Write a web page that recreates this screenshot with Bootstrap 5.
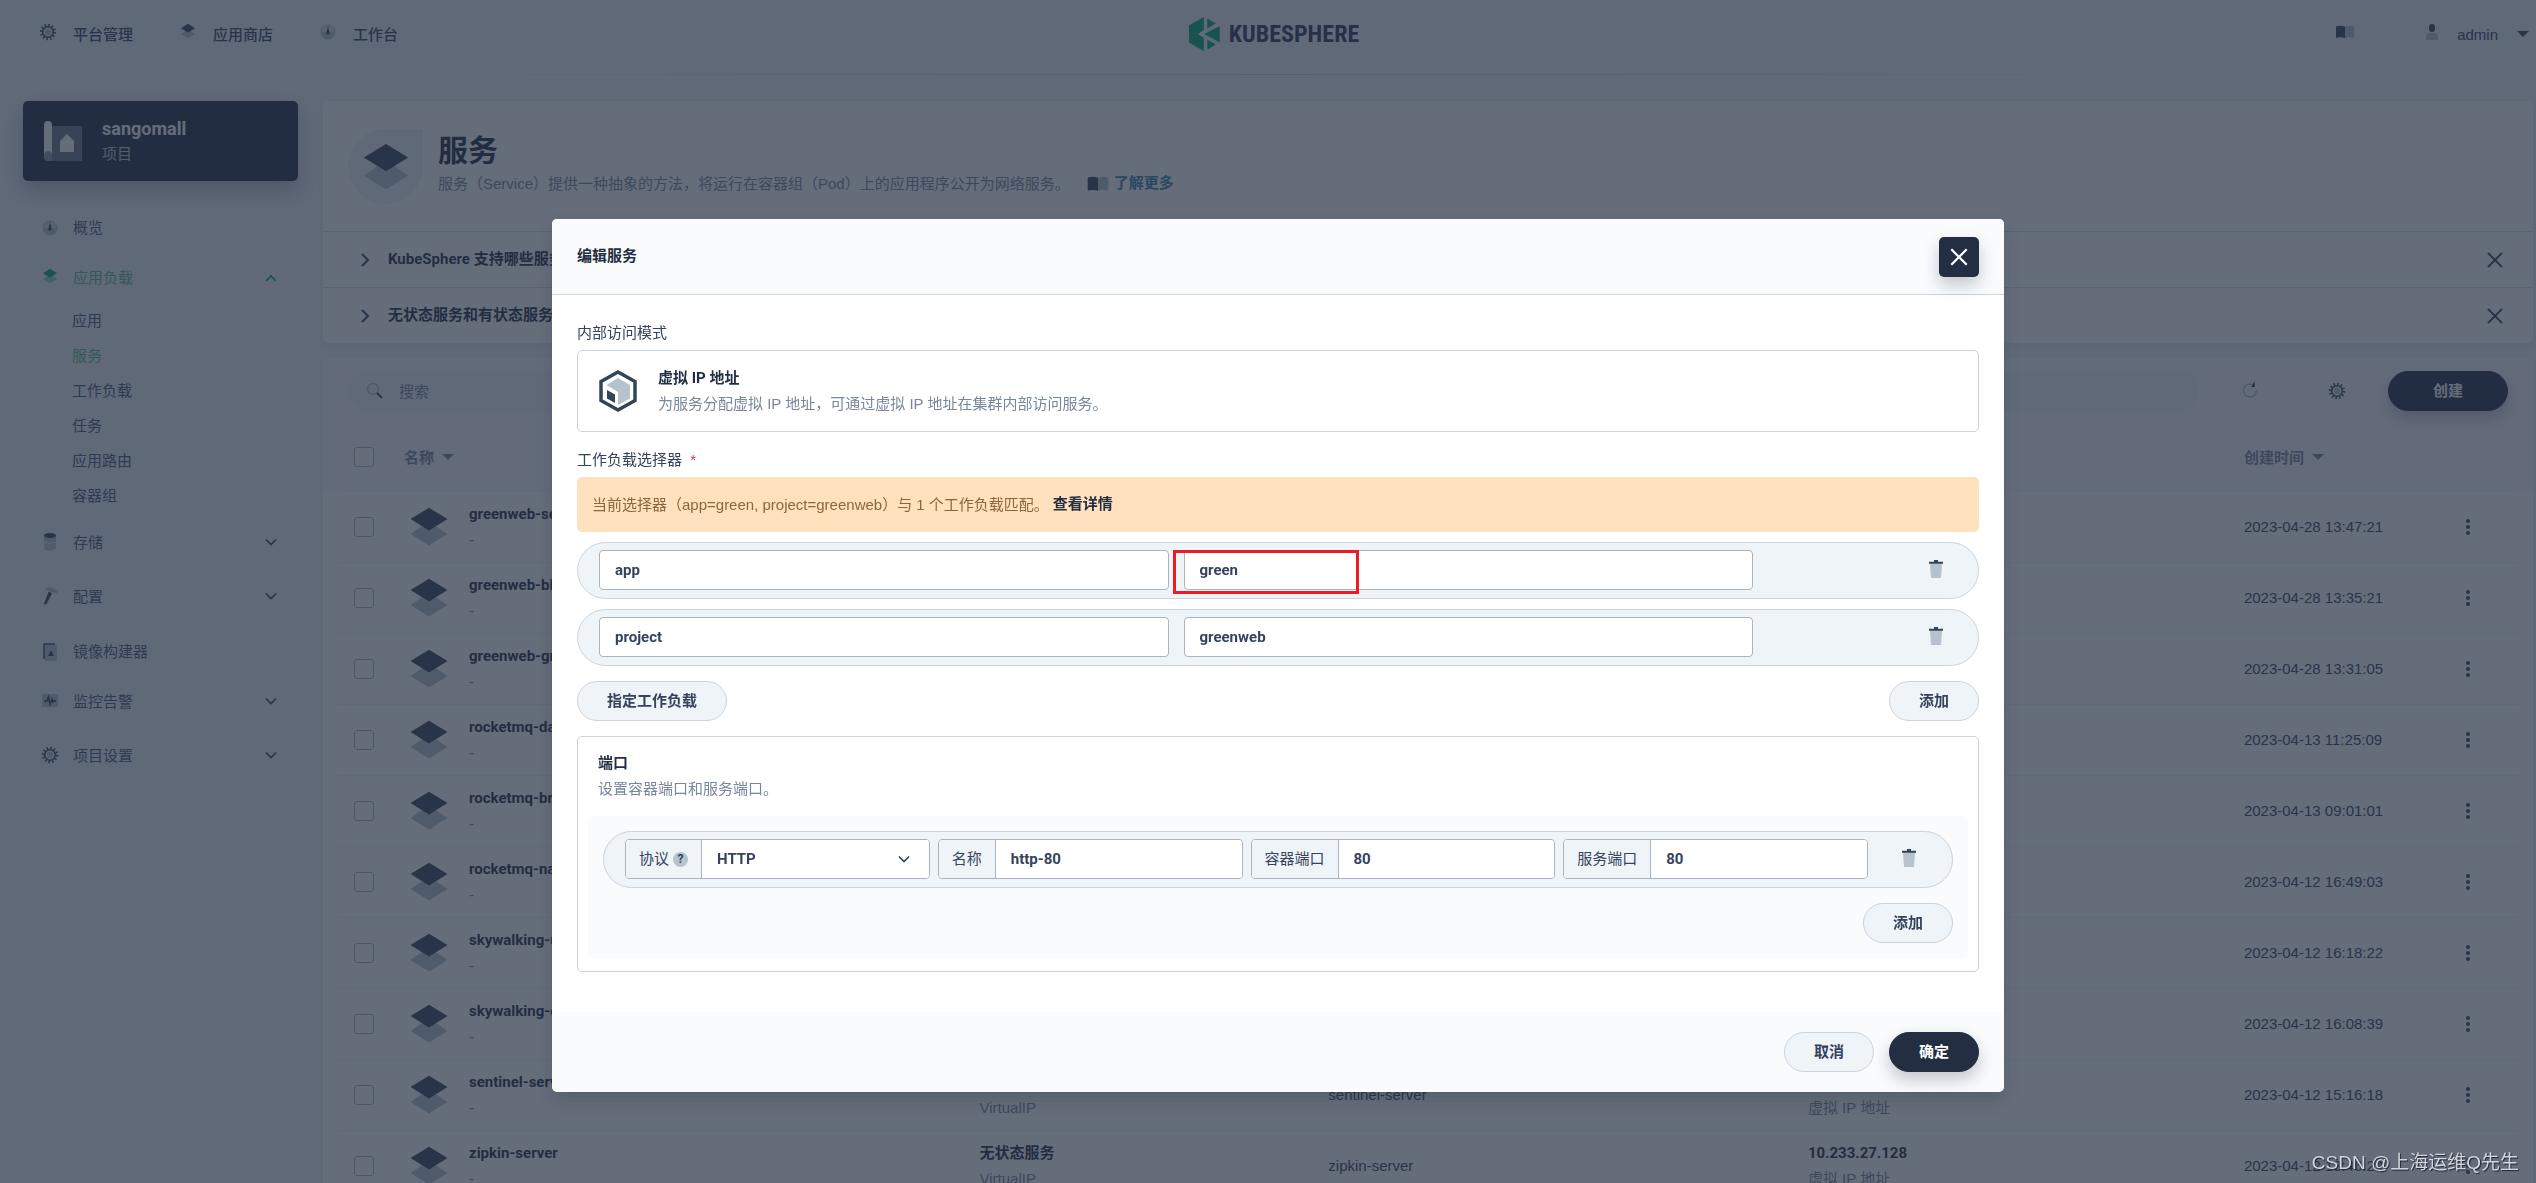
<!DOCTYPE html>
<html lang="zh-CN">
<head>
<meta charset="utf-8">
<meta name="viewport" content="width=device-width, initial-scale=1">
<title>KubeSphere - 服务</title>
<link href="https://cdn.jsdelivr.net/npm/bootstrap@5.3.0/dist/css/bootstrap.min.css" rel="stylesheet">
<style>
:root{--ink:#242e42;--ink2:#36435c;--txt:#4a5974;--mute:#79879c;--line:#ccd3db;--soft:#eff4f9;--pale:#f9fbfd;--green:#55bc8a}
body{font:15px/25px "Liberation Sans","Noto Sans CJK SC",sans-serif;color:var(--txt);background:var(--soft)}
a{color:inherit;text-decoration:none}
svg{flex:none;display:block}
.strong{font-family:Roboto,"Noto Sans CJK SC",sans-serif;font-weight:700;color:var(--ink)}
.muted{color:var(--mute)}
.ic-dark{color:#324558}
.page{height:100vh;overflow:hidden}
.ic{width:20px;height:20px}
.icon-btn{background:none;border:0;padding:0;color:var(--ink2)}
.caret{border:6px solid transparent;border-top-color:currentColor;border-bottom:0}

.topbar{height:75px;padding:0 7px 7px 38px;position:relative;color:var(--ink2)}
.topbar nav{gap:45px;font-weight:500}
.topbar nav a{gap:15px;color:var(--ink2)}
.topbar nav svg,.topbar .who svg{margin-bottom:4px}
.topbar::after{content:"";position:absolute;left:320px;right:300px;bottom:0;height:1px;background:linear-gradient(90deg,transparent,#ccd3db,transparent)}
.brand-link{left:50%;transform:translateX(-50%);margin-left:6px;gap:9px;top:17px;line-height:34px;font-family:"Liberation Sans Narrow","Roboto Condensed","Liberation Sans",sans-serif;font-size:24px;font-weight:700;color:#3b3559}
.who{gap:19px}

.columns{padding:26px 3px 0 23px;gap:25px}
.side{width:275px;flex:none}
.project{height:80px;border-radius:5px;background:var(--ink);color:#fff;padding:0 20px;gap:20px;box-shadow:0 10px 20px rgba(36,46,66,.3)}
.project .strong{font-size:18px;color:#fff}
.project small{font-size:15px;color:#c5cbd5}
.menu{padding:19px 18px 0 17px}
.menu .item{height:54px;gap:13px;width:100%;padding:0 2px 2px 0;color:var(--txt)}
.menu .item.leaf{height:51px;padding:4px 2px 0 0}
.menu .on,.menu .item.on{color:var(--green)}
.menu ul{margin:-2px 0 3px}
.menu ul a{display:block;line-height:35px;padding-left:32px}

.panel{background:#fff;border-radius:5px;box-shadow:0 4px 8px rgba(36,46,66,.06)}
.panel+.panel{margin-top:15px}
.banner{height:130px;padding:28px 25px;gap:15px}
.drop{width:75px;height:75px;border-radius:50% 0 50% 50%;background:var(--soft);display:grid;place-items:center}
.banner h1{font-size:30px;line-height:40px;margin:2px 0 0}
.banner p{line-height:25px}
.more{color:#3385b0}
.faq{height:56px;border-top:1px solid #d8dee5;padding:0 28px 0 36px;gap:16px}
.tools{height:66px;padding:0 25px;background:var(--pale);border-radius:5px 5px 0 0}
.search{height:40px;border-radius:20px;background:var(--soft);padding:0 18px;gap:13px;margin-right:42px}
.search input{border:0;background:none;outline:0;width:100%;color:var(--ink2)}
.search input::placeholder{color:var(--mute)}
.tool-icon{margin-right:67px}
.tool-icon+.tool-icon{margin-right:41px}
.pill-btn{height:40px;border-radius:20px;padding:0 29px;border:1px solid var(--line);background:var(--soft);font-family:Roboto,"Noto Sans CJK SC",sans-serif;font-weight:700;font-size:15px;line-height:36px;color:var(--ink2)}
.pill-btn.dark{background:var(--ink);border-color:var(--ink);color:#fff;box-shadow:0 8px 16px rgba(36,46,66,.25)}
.pill-btn.wide{width:120px}
.head-bg{padding:0 15px;background:linear-gradient(var(--pale),var(--pale)) top/100% 67px no-repeat}
.list{table-layout:fixed;width:100%;border-collapse:collapse}
.list th,.list td{padding:10px 16px;border-bottom:1px solid var(--soft);vertical-align:middle}
.list th{height:67px;color:var(--mute);font-weight:700}
.list td{height:71px;color:var(--ink2)}
.list b{display:block}
.list .form-check-input{width:20px;height:20px;margin:0;display:block;border-color:#abb4be;border-radius:3px}
.list td:last-child{padding-left:15px}
.svc{gap:20px;padding-left:5px}

.veil{background:rgba(36,46,66,.7);position:fixed;inset:0;z-index:1050}
.modal{padding:219px 0 0 20px;overflow:hidden}
.modal-dialog{max-width:1452px;margin:0 auto}
.modal-content{border:0;border-radius:5px;overflow:hidden;box-shadow:0 8px 16px rgba(36,46,66,.2);color:var(--txt)}
.modal-header{height:76px;padding:0 25px;background:var(--pale);border-bottom:1px solid var(--line);border-radius:0}
.modal-header .strong{font-size:15px;line-height:25px;margin:0}
.shut{width:40px;height:40px;border:0;border-radius:5px;background:var(--ink);color:#fff;display:grid;place-items:center;padding:0;box-shadow:0 8px 16px rgba(36,46,66,.25)}
.modal-body{padding:25px 25px 40px}
.modal-footer{height:80px;padding:0 25px;background:var(--pale);border:0;gap:15px}
.modal-footer>*{margin:0}
.cap{line-height:25px;height:25px;margin-bottom:5px;color:var(--ink2)}
.mode{border:1px solid var(--line);border-radius:5px;height:82px;padding:0 20px;gap:20px;margin-bottom:15px}
.tip{background:#ffe1be;color:#8d663e;border-radius:5px;padding:15px;height:55px;margin-bottom:10px}
.pillrow{height:57px;border:1px solid var(--line);border-radius:29px;background:var(--soft);padding:0 21px 1px;margin-bottom:10px;position:relative}
.pair{gap:15px}
.field{height:40px;border:1px solid #abb4be;border-radius:4px;padding:0 15px;background:#fff;font-family:Roboto,"Noto Sans CJK SC",sans-serif;font-weight:700;color:var(--ink2);min-width:0;outline:0}
.mark-box{position:absolute;left:595px;top:7px;width:186px;height:44px;border:3px solid #ed1c24;pointer-events:none}
.trash{margin:0 11px 2px 173px}
.btn-line{margin:15px 0}
.ports{border:1px solid var(--line);border-radius:5px;padding:14px 10px 13px}
.ports>.px-info{height:65px;padding:0 10px}
.ports-in{background:var(--pale);border-radius:5px;padding:15px}
.ports .pillrow{margin-bottom:15px}
.grp{flex:1 1 0;height:40px;border:1px solid #abb4be;border-radius:4px;background:#fff;overflow:hidden;min-width:0}
.grp label{padding:0 13px;line-height:38px;background:var(--soft);border-right:1px solid #abb4be;color:var(--ink2);white-space:nowrap}
.grp .field{border:0;border-radius:0;height:38px;flex:1;width:100%}
.grp select{appearance:none}
.grp .chev{position:absolute;right:18px;top:12px;pointer-events:none}
.ports .trash{margin:0 12px 2px 31px}
.qm{width:15px;height:15px;border-radius:50%;background:#b6c2cd;font:700 12px/15px Roboto,sans-serif;text-align:center;color:#324558}
.stamp{position:fixed;right:17px;bottom:6px;z-index:1070;font-size:19px;line-height:28px;color:#d3d6da;text-shadow:1px 1px 1px #1c2433}
</style>
<script src="https://cdn.jsdelivr.net/npm/bootstrap@5.3.0/dist/js/bootstrap.bundle.min.js"></script>
</head>
<body>
<svg width="0" height="0" class="position-absolute" aria-hidden="true">
<symbol id="gear" viewBox="0 0 20 20"><circle cx="10" cy="10" r="7" fill="none" stroke="#324558" stroke-width="2.400" stroke-dasharray="1.500 2.165"/><circle cx="10" cy="10" r="5.300" fill="none" stroke="#324558" stroke-width="1.600"/><circle cx="10" cy="10" r="3.200" fill="#b6c2cd"/></symbol>
<symbol id="layers" viewBox="0 0 40 40"><path d="M20 14.500 38.500 27 20 38.500 1.500 27z" fill="#b6c2cd"/><path d="M20 .8 38.500 12 20 23.500 1.500 12z" fill="#324558"/></symbol>
<symbol id="layers-on" viewBox="0 0 40 40"><path d="M20 14.500 38.500 27 20 38.500 1.500 27z" fill="#90d6b5"/><path d="M20 .8 38.500 12 20 23.500 1.500 12z" fill="#00aa72"/></symbol>
<symbol id="dash" viewBox="0 0 20 20"><circle cx="10" cy="10" r="7.500" fill="#b6c2cd"/><path d="M4 9a6 6 0 0 1 5-5.300V10H4zM16 9a6 6 0 0 0-5-5.300V10h5z" fill="#d5dde5"/><path d="M10 5 11.600 10.500a1.700 1.700 0 1 1-3.200 0z" fill="#324558"/></symbol>
<symbol id="book" viewBox="0 0 20 14"><path d="M1 1.500Q5 0 10 1.500V13Q5 11.500 1 13z" fill="#324558"/><path d="M10 1.500Q15 0 19 1.500V13Q15 11.500 10 13z" fill="#b6c2cd"/></symbol>
<symbol id="chev" viewBox="0 0 14 14"><path d="M2 4.500 7 9.500l5-5" fill="none" stroke="currentColor" stroke-width="1.700"/></symbol>
<symbol id="cross" viewBox="0 0 20 20"><path d="M3 3 17 17M17 3 3 17" stroke="currentColor" stroke-width="2"/></symbol>
<symbol id="trash" viewBox="0 0 20 20"><path d="M4 4.500h12l-1 14.500H5z" fill="#b6c2cd"/><path d="M3 2.800h5V1h4v1.800h5v2H3z" fill="#324558"/></symbol>
<symbol id="dots" viewBox="0 0 20 20"><g fill="#36435c"><circle cx="10" cy="4" r="2"/><circle cx="10" cy="10" r="2"/><circle cx="10" cy="16" r="2"/></g></symbol>
</svg>

<div class="page">
<header class="topbar d-flex align-items-center justify-content-between">
  <nav class="d-flex">
    <a href="#" class="d-flex align-items-center"><svg class="ic"><use href="#gear"/></svg>平台管理</a>
    <a href="#" class="d-flex align-items-center"><svg class="ic" viewBox="-3 -2 26 26"><use href="#layers" width="20" height="20"/></svg>应用商店</a>
    <a href="#" class="d-flex align-items-center"><svg class="ic"><use href="#dash"/></svg>工作台</a>
  </nav>
  <a href="#" class="brand-link position-absolute d-flex">
    <svg width="31" height="34" viewBox="0 0 31 34"><g fill="#00aa72"><path d="M0 8.500 15 0v13L9 17l6 4v13L0 25.500z"/><path d="M18.500 1.500 27 6.500 18.500 11.500zM31 9v16.500L15.500 17zM18.500 22.500 27 27.500 18.500 32.500z"/></g></svg>
    <span>KUBESPHERE</span>
  </a>
  <div class="d-flex align-items-center who">
    <a href="#" aria-label="文档" class="me-5"><svg width="20" height="14"><use href="#book"/></svg></a>
    <svg class="ms-1" width="12" height="16" viewBox="0 0 12 16"><rect x="3" width="6" height="8" rx="3" fill="#324558"/><path d="M0 12q0-3 3-3h6q3 0 3 3v4H0z" fill="#b6c2cd"/></svg>
    <span>admin</span><span class="caret"></span>
  </div>
</header>

<div class="columns d-flex">
<aside class="side">
  <a href="#" class="project d-flex align-items-center">
    <svg width="39" height="40" viewBox="0 0 39 40"><path d="M8 5h31v35H5V32z" fill="#6b7588"/><path d="M1 4a4 4 0 0 1 8 0v29H1z" fill="#fff"/><path d="M1 36a4 4 0 0 1 8-3v7H5a4 4 0 0 1-4-4" fill="#8d97a6"/><path d="M17 20 24 13l7 7v11H17z" fill="#fff"/></svg>
    <span class="d-flex flex-column"><span class="strong">sangomall</span><small>项目</small></span>
  </a>
  <nav class="menu">
    <a href="#" class="item leaf d-flex align-items-center"><svg class="ic"><use href="#dash"/></svg>概览</a>
    <a href="#" class="item on d-flex align-items-center"><svg class="ic" viewBox="-3 -2 26 26"><use href="#layers-on" width="20" height="20"/></svg><span class="flex-grow-1">应用负载</span><svg width="14" height="14" viewBox="0 0 14 14"><path d="m2 11 5-5 5 5" fill="none" stroke="#00aa72" stroke-width="1.700"/></svg></a>
    <ul class="list-unstyled">
      <li><a href="#">应用</a></li><li><a href="#" class="on">服务</a></li><li><a href="#">工作负载</a></li><li><a href="#">任务</a></li><li><a href="#">应用路由</a></li><li><a href="#">容器组</a></li>
    </ul>
    <a href="#" class="item d-flex align-items-center"><svg class="ic" viewBox="0 0 20 20"><path d="M4 3v14q6 3 12 0V3z" fill="#b6c2cd"/><path d="M4 10q6 3 12 0" fill="none" stroke="#eff4f9"/><ellipse cx="10" cy="3.500" rx="6" ry="2.500" fill="#324558"/></svg><span class="flex-grow-1">存储</span><svg width="14" height="14" class="ic-dark"><use href="#chev"/></svg></a>
    <a href="#" class="item d-flex align-items-center"><svg class="ic" viewBox="0 0 20 20"><path d="m9 6 2.500 1.500L6 18H4.500z" fill="#324558" stroke="#324558"/><path d="M5 2.500q4-2 9 0l4 2.500-1 2.500-3-1-5-1.500z" fill="#b6c2cd"/></svg><span class="flex-grow-1">配置</span><svg width="14" height="14" class="ic-dark"><use href="#chev"/></svg></a>
    <a href="#" class="item leaf d-flex align-items-center"><svg class="ic" viewBox="0 0 20 20"><rect x="5" y="3" width="12" height="16" fill="#b6c2cd"/><path d="M15 2H4v15" fill="none" stroke="#324558" stroke-width="1.500"/><path d="m11 8 3 6H8z" fill="#324558"/></svg>镜像构建器</a>
    <a href="#" class="item d-flex align-items-center"><svg class="ic" viewBox="0 0 20 20"><rect x="2" y="3" width="16" height="13" rx="1.500" fill="#b6c2cd"/><path d="M4 10h3l1.500-4L10 13l2-5 1 3 1-1h2" fill="none" stroke="#324558" stroke-width="1.500"/></svg><span class="flex-grow-1">监控告警</span><svg width="14" height="14" class="ic-dark"><use href="#chev"/></svg></a>
    <a href="#" class="item d-flex align-items-center"><svg class="ic"><use href="#gear"/></svg><span class="flex-grow-1">项目设置</span><svg width="14" height="14" class="ic-dark"><use href="#chev"/></svg></a>
  </nav>
</aside>

<main class="flex-grow-1">
  <section class="panel">
    <div class="banner d-flex">
      <div class="drop"><svg width="48" height="48"><use href="#layers"/></svg></div>
      <div>
        <h1 class="strong">服务</h1>
        <p class="muted m-0 d-flex align-items-center"><span>服务（Service）提供一种抽象的方法，将运行在容器组（Pod）上的应用程序公开为网络服务。</span><a href="#" class="strong ms-3 d-flex align-items-center gap-1"><svg width="24" height="16"><use href="#book"/></svg><span class="more">了解更多</span></a></p>
      </div>
    </div>
    <div class="faq d-flex align-items-center"><svg width="13" height="16" viewBox="0 0 13 16"><path d="m3 2 6 6-6 6" fill="none" stroke="#324558" stroke-width="2"/></svg><span class="strong flex-grow-1">KubeSphere 支持哪些服务类型？</span><button class="icon-btn" aria-label="关闭"><svg class="ic"><use href="#cross"/></svg></button></div>
    <div class="faq d-flex align-items-center"><svg width="13" height="16" viewBox="0 0 13 16"><path d="m3 2 6 6-6 6" fill="none" stroke="#324558" stroke-width="2"/></svg><span class="strong flex-grow-1">无状态服务和有状态服务的区别？</span><button class="icon-btn" aria-label="关闭"><svg class="ic"><use href="#cross"/></svg></button></div>
  </section>

  <section class="panel">
    <div class="tools d-flex align-items-center">
      <label class="search d-flex align-items-center flex-grow-1"><svg width="18" height="18" viewBox="0 0 18 18"><circle cx="7" cy="7" r="5.500" fill="none" stroke="#b6c2cd" stroke-width="1.500"/><path d="m11 11 5 5" stroke="#324558" stroke-width="2"/></svg><input type="text" placeholder="搜索" aria-label="搜索"></label>
      <button class="icon-btn tool-icon" aria-label="刷新"><svg class="ic" viewBox="0 0 20 20"><path d="M12 3.400A6.500 6.500 0 1 0 16.500 9.500" fill="none" stroke="#b6c2cd" stroke-width="1.500"/><path d="M14.500.500 15 6l-4 0z" fill="#324558"/></svg></button>
      <button class="icon-btn tool-icon" aria-label="设置"><svg class="ic"><use href="#gear"/></svg></button>
      <button class="pill-btn dark wide">创建</button>
    </div>
    <div class="head-bg">
    <table class="list">
      <colgroup><col style="width:50px"><col style="width:26.4%"><col style="width:16%"><col style="width:22%"><col style="width:20%"><col><col style="width:75px"></colgroup>
      <thead><tr><th><input class="form-check-input" type="checkbox" aria-label="全选"></th><th><span class="d-flex align-items-center gap-2">名称<span class="caret"></span></span></th><th>服务类型</th><th>应用</th><th>内部访问</th><th><span class="d-flex align-items-center gap-2">创建时间<span class="caret"></span></span></th><th></th></tr></thead>
      <tbody id="rows"></tbody>
    </table>
    </div>
  </section>
</main>
</div>
</div>

<div class="veil"></div>
<div class="modal show d-block" tabindex="-1" role="dialog" aria-labelledby="dlg">
<div class="modal-dialog"><form class="modal-content">
  <div class="modal-header d-flex align-items-center justify-content-between"><h2 class="strong" id="dlg">编辑服务</h2><button type="button" class="shut" aria-label="关闭"><svg width="22" height="22"><use href="#cross"/></svg></button></div>
  <div class="modal-body">
    <div class="cap">内部访问模式</div>
    <div class="mode d-flex align-items-center">
      <svg width="40" height="42" viewBox="0 0 40 42"><path d="M20 2 37 11.500v19L20 40 3 30.500v-19z" fill="#fff" stroke="#324558" stroke-width="3.500"/><path d="M20 8 32 15v13.500L20 35V22L8.500 15z" fill="#b6c2cd"/><path d="m9 20 8 4.500v8.500l-8-4.500z" fill="#324558"/></svg>
      <div><div class="strong">虚拟 IP 地址</div><div class="muted">为服务分配虚拟 IP 地址，可通过虚拟 IP 地址在集群内部访问服务。</div></div>
    </div>
    <div class="cap">工作负载选择器 <span class="text-danger ms-1">*</span></div>
    <div class="tip d-flex gap-1"><span>当前选择器（app=green, project=greenweb）与 1 个工作负载匹配。</span><a href="#" class="strong">查看详情</a></div>
    <div class="pillrow d-flex align-items-center">
      <div class="pair d-flex flex-grow-1"><input class="field flex-fill" value="app" aria-label="键"><input class="field flex-fill" value="green" aria-label="值"></div>
      <button type="button" class="icon-btn trash" aria-label="删除"><svg class="ic"><use href="#trash"/></svg></button>
      <span class="mark-box"></span>
    </div>
    <div class="pillrow d-flex align-items-center">
      <div class="pair d-flex flex-grow-1"><input class="field flex-fill" value="project" aria-label="键"><input class="field flex-fill" value="greenweb" aria-label="值"></div>
      <button type="button" class="icon-btn trash" aria-label="删除"><svg class="ic"><use href="#trash"/></svg></button>
    </div>
    <div class="btn-line d-flex justify-content-between"><button type="button" class="pill-btn">指定工作负载</button><button type="button" class="pill-btn">添加</button></div>
    <div class="ports">
      <div class="px-info"><div class="strong">端口</div><div class="muted">设置容器端口和服务端口。</div></div>
      <div class="ports-in">
        <div class="pillrow d-flex align-items-center">
          <div class="d-flex flex-grow-1 gap-2">
            <div class="grp d-flex position-relative"><label for="proto" class="d-flex align-items-center gap-1">协议<span class="qm">?</span></label><select id="proto" class="field"><option>HTTP</option></select><svg class="chev ic-dark" width="14" height="14"><use href="#chev"/></svg></div>
            <div class="grp d-flex"><label for="pname">名称</label><input id="pname" class="field" value="http-80"></div>
            <div class="grp d-flex"><label for="cport">容器端口</label><input id="cport" class="field" value="80"></div>
            <div class="grp d-flex"><label for="sport">服务端口</label><input id="sport" class="field" value="80"></div>
          </div>
          <button type="button" class="icon-btn trash" aria-label="删除"><svg class="ic"><use href="#trash"/></svg></button>
        </div>
        <div class="d-flex justify-content-end"><button type="button" class="pill-btn">添加</button></div>
      </div>
    </div>
  </div>
  <div class="modal-footer d-flex justify-content-end"><button type="button" class="pill-btn">取消</button><button type="button" class="pill-btn dark">确定</button></div>
</form></div>
</div>
<div class="stamp">CSDN @上海运维Q先生</div>

<script>
const services=[
["greenweb-service","2023-04-28 13:47:21"],["greenweb-blue","2023-04-28 13:35:21"],["greenweb-green","2023-04-28 13:31:05"],
["rocketmq-dashboard","2023-04-13 11:25:09"],["rocketmq-broker","2023-04-13 09:01:01"],["rocketmq-nameserver","2023-04-12 16:49:03"],
["skywalking-ui","2023-04-12 16:18:22"],["skywalking-oap","2023-04-12 16:08:39"],["sentinel-server","2023-04-12 15:16:18"],["zipkin-server","2023-04-12 13:46:22"]];
document.getElementById("rows").innerHTML=services.map(([name,time])=>`<tr>
<td><input class="form-check-input" type="checkbox" aria-label="${name}"></td>
<td><div class="svc d-flex align-items-center"><svg width="40" height="40"><use href="#layers"/></svg><div><b class="strong">${name}</b><span class="muted">-</span></div></div></td>
<td><b class="strong">无状态服务</b><span class="muted">VirtualIP</span></td>
<td>${name}</td>
<td><b class="strong">10.233.27.128</b><span class="muted">虚拟 IP 地址</span></td>
<td>${time}</td>
<td><button class="icon-btn d-block" aria-label="更多操作"><svg class="ic"><use href="#dots"/></svg></button></td></tr>`).join("");
</script>
</body>
</html>
